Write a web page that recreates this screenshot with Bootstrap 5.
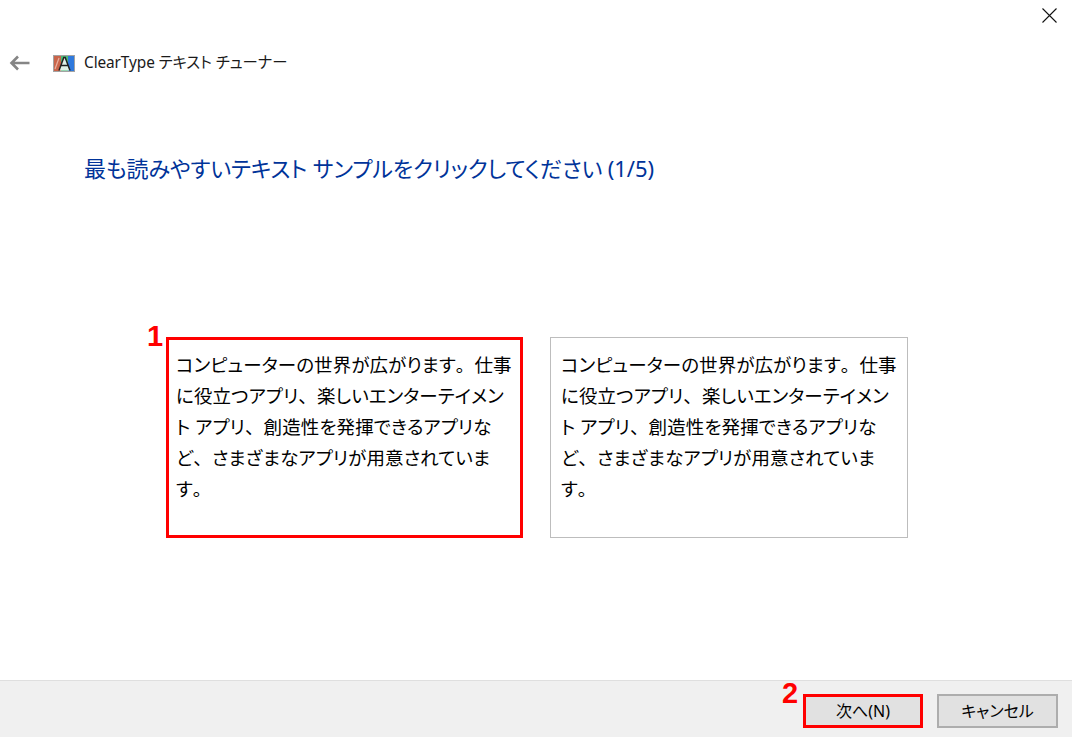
<!DOCTYPE html>
<html lang="ja">
<head>
<meta charset="utf-8">
<title>ClearType テキスト チューナー</title>
<link href="https://cdn.jsdelivr.net/npm/bootstrap@5.3.0/dist/css/bootstrap.min.css" rel="stylesheet">
<style>
html,body{height:737px;overflow:hidden;background:#fff}
body{font-family:"Noto Sans","Noto Sans CJK JP",sans-serif;color:#000;font-feature-settings:"palt"}
.wiz{width:1072px;height:737px}
.closebar{height:47px;padding:8px 15px 0 0}
.titlerow{height:32px;padding-left:9px;font-size:15.4px;letter-spacing:-.1px;color:#1a1a1a}
.backarrow{margin-right:23px}
.appicon{margin-right:9px}
.headline{margin:73px 0 0 84px;font-size:22px;line-height:32px;color:#003399;font-weight:400;letter-spacing:-.1px}
.samples{margin:153px 0 0 166px;gap:27px}
.sample{position:relative;width:358px;height:201px;background:#fff;border:1px solid #bdbdbd;padding:11px 0 0 10px;font-size:18.5px;line-height:31px;white-space:nowrap;letter-spacing:.1px}
.sample.picked{width:357px;border:3px solid #f00;padding:9px 0 0 7px}
.zenkaku{font-feature-settings:normal}
.step{position:absolute;font-family:"Liberation Sans",sans-serif;font-weight:700;font-size:29px;line-height:29px;color:#f00;letter-spacing:0}
.step-a{left:-22px;top:-18px}
.step-b{left:-24px;top:-18px}
.footbar{height:57px;background:#f0f0f0;border-top:1px solid #dfdfdf;padding:13px 14px 0 0;gap:14px}
.wizbtn{position:relative;width:121px;height:34px;border:2px solid #adadad;border-radius:0;background:#e1e1e1;color:#000;font-size:16px;line-height:28px;padding:0;font-feature-settings:"palt"}
.wizbtn.picked{width:120px;border:3px solid #f00;line-height:26px}
</style>
</head>
<body>
<div class="wiz d-flex flex-column">
  <div class="closebar d-flex justify-content-end">
    <svg width="15" height="15" viewBox="0 0 15 15" aria-label="閉じる"><path d="M.5.5l14 14M14.5.5l-14 14" stroke="#111" stroke-width="1.1" fill="none"/></svg>
  </div>
  <div class="titlerow d-flex align-items-center">
    <svg class="backarrow" width="21" height="16" viewBox="0 0 21 16"><path d="M20.5 8H2.500M9 1.500L2.500 8l6.500 6.500" stroke="#858585" stroke-width="2.600" fill="none"/></svg>
    <svg class="appicon" width="22" height="17" viewBox="0 0 22 17"><rect width="22" height="17" fill="#a3a3a3"/><rect x="1" y="1" width="7" height="15" fill="#c9654a"/><path d="M2 14L6 3" stroke="#e8b0a0" stroke-width="1.200"/><rect x="8" y="1" width="7" height="15" fill="#4cbb78"/><rect x="15" y="1" width="6" height="15" fill="#2f79dd"/><path d="M6 15.500L11 2h1l5 13.500z" fill="#dff0e6"/><path d="M6 15.500L10.800 2.500h1.400l4.800 13M8 10.500h7" stroke="#222" stroke-width="1.500" fill="none"/></svg>
    <span>ClearType テキスト チューナー</span>
  </div>
  <h1 class="headline">最も読みやすいテキスト サンプルをクリックしてください (1/5)</h1>
  <div class="samples d-flex">
    <div class="sample picked">
      <span class="step step-a">1</span>
      コンピューターの世界が広がります<span class="zenkaku">。</span>仕事<br>に役立つアプリ<span class="zenkaku">、</span>楽しいエンターテイメン<br>ト アプリ<span class="zenkaku">、</span>創造性を発揮できるアプリな<br>ど<span class="zenkaku">、</span>さまざまなアプリが用意されていま<br>す<span class="zenkaku">。</span>
    </div>
    <div class="sample">
      コンピューターの世界が広がります<span class="zenkaku">。</span>仕事<br>に役立つアプリ<span class="zenkaku">、</span>楽しいエンターテイメン<br>ト アプリ<span class="zenkaku">、</span>創造性を発揮できるアプリな<br>ど<span class="zenkaku">、</span>さまざまなアプリが用意されていま<br>す<span class="zenkaku">。</span>
    </div>
  </div>
  <div class="footbar mt-auto d-flex justify-content-end">
    <button type="button" class="btn wizbtn picked"><span class="step step-b">2</span>次へ(N)</button>
    <button type="button" class="btn wizbtn">キャンセル</button>
  </div>
</div>
<script src="https://cdn.jsdelivr.net/npm/bootstrap@5.3.0/dist/js/bootstrap.bundle.min.js"></script>
</body>
</html>
